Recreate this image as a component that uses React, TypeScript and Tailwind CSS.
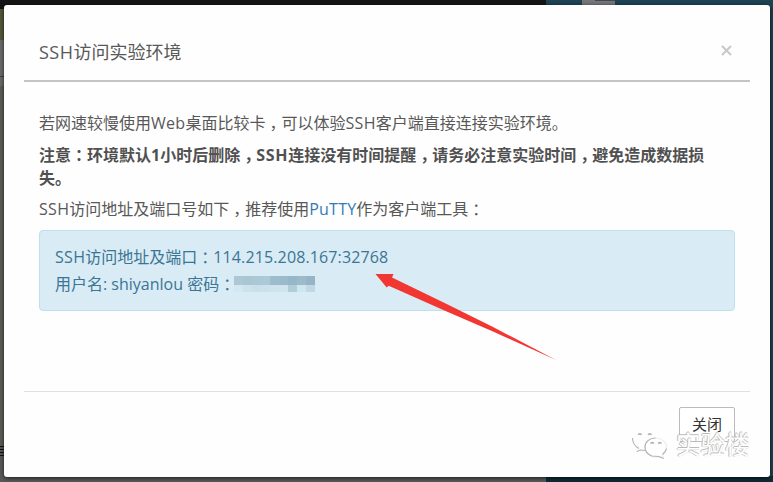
import type { ReactNode } from 'react';

// Full-width punctuation with its ink moved closer to the middle of its cell.
function Mark({ children }: { children: ReactNode }) {
  return <span className="inline-block w-[16px] pl-[4px]">{children}</span>;
}

function Latin({ children }: { children: ReactNode }) {
  return <span className="tracking-[0.3px]">{children}</span>;
}

function Backdrop() {
  return (
    <div className="absolute inset-0 flex bg-[#1e4352]">
      <div className="flex w-[546px] flex-col bg-[#595959]">
        <div className="h-[9px] bg-[#151515]" />
        <div className="h-[31px] w-[4px] bg-[#55573b]" />
        <div className="h-[36px] w-[4px] bg-[#6b6c69]" />
        <div className="h-px w-[4px] bg-[#41423f]" />
        <div className="h-[9px] w-[4px] bg-[#6b6c69]" />
        <div className="h-[360px] w-[4px] bg-[#5c5d57]" />
        <div className="flex h-[12px] w-[4px] flex-col gap-[2px]">
          <div className="h-px bg-[#111]" />
          <div className="h-px bg-[#111]" />
          <div className="h-px bg-[#111]" />
          <div className="h-px bg-[#111]" />
        </div>
      </div>
      <div className="flex flex-1 flex-col justify-between">
        <div className="ml-[36px] h-[5px] w-[33px] bg-[#77777b] pl-[13px]">
          <div className="h-[1px] bg-[#3d4a54]" />
        </div>
        <div className="h-[6px] bg-[#0f2a36]" />
      </div>
    </div>
  );
}

function Watermark() {
  return (
    <div className="absolute left-[631px] top-[429px] flex items-center">
      <svg width="38" height="32" viewBox="0 0 38 32" fill="none" stroke="#b4b4b4" strokeWidth="1.2">
        <path d="M1.500 9C1.500 14 3 16.500 8 19.500M5.500 22.500L9.500 21L14 21.500" />
        <path
          d="M24.500 9C30.500 9 35.500 13 35.500 18C35.500 21 34 23.500 31.500 25.500L32.500 29.500L28.500 27.500C22 29.500 14 25.500 14 18C14 13 18.500 9 24.500 9Z"
          fill="white"
          stroke="#ececec"
        />
        <path d="M24.500 9C18.500 9 14 13 14 18C14 22 17 25.500 21 27L28 27.500L32.500 29.500M35.500 19.500C35 22 34 23.500 31.500 25.500" />
        <path d="M7 5.700Q8.800 4 10.600 5.700M17 5.700Q18.800 4 20.600 5.700M19.500 14.500Q21.300 12.800 23 14.500M27 14.500Q28.800 12.800 30.500 14.500" strokeWidth="1.500" />
      </svg>
      <span className="ml-[7px] text-[24.5px] leading-[32px] text-white [text-shadow:-1px_0_0_#bbb,0_-1px_0_#bbb,0_0_1px_#ccc]">
        实验楼
      </span>
    </div>
  );
}

const blocks = [
  ['#adc8d5', '#abc6d3', '#aac8d5', '#abc9d6', '#9dbdcc', '#9abbcb', '#95b7c8', '#9cbac9', '#95b5c5'],
  ['#d3e8f1', '#cce3ed', '#c8e0ea', '#cbe2ec', '#cde3ed', '#cee4ee', '#b0cdd9', '#cfe5ef', '#bfd8e4'],
];

export default function App() {
  return (
    <div className="relative h-[482px] w-[773px] overflow-hidden px-[4px] pt-[5px] font-['Open_Sans','Noto_Sans_CJK_SC',sans-serif] text-[16px] leading-[23px] text-[#585858]">
      <Backdrop />
      <div className="relative flex h-[472px] w-[766px] flex-col rounded-[3px] bg-[#fefefe] px-[20px] shadow-[0_1px_4px_rgba(0,0,0,0.7)]">
        <header className="flex h-[77px] items-center justify-between border-b-2 border-[#c4c4c4] pl-[15px] pr-[17px] pt-[19px]">
          <h1 className="text-[18px] leading-[26px]">
            <span className="tracking-[0.5px]">SSH</span>访问实验环境
          </h1>
          <button aria-label="×" className="mt-[-4px] flex">
            <svg width="13" height="13" viewBox="0 0 13 13" stroke="#c8c8c8" strokeWidth="2">
              <path d="M2 2L11 11M11 2L2 11" />
            </svg>
          </button>
        </header>

        <main className="flex flex-1 flex-col px-[15px] pt-[30px]">
          <p className="whitespace-nowrap">
            若网速较慢使用<Latin>Web</Latin>桌面比较卡<Mark>，</Mark>可以体验<Latin>SSH</Latin>客户端直接连接实验环境。
          </p>
          <p className="mt-[9px] whitespace-nowrap font-bold text-[#505050]">
            注意<Mark>：</Mark>环境默认1小时后删除<Mark>，</Mark><span className="tracking-[0.7px]">SSH</span>连接没有时间提醒<Mark>，</Mark>请务必注意实验时间<Mark>，</Mark>避免造成数据损
            <br />
            失。
          </p>
          <p className="mt-[8px] whitespace-nowrap">
            <Latin>SSH</Latin>访问地址及端口号如下<Mark>，</Mark>推荐使用<a className="tracking-[0.2px] text-[#337ab7]">PuTTY</a>作为客户端工具<Mark>：</Mark>
          </p>
          <section className="mt-[9px] flex h-[81px] flex-col gap-[4px] rounded-[4px] border border-[#bfe0ea] bg-[#d9ebf5] px-[15px] pt-[15px] text-[#3b7594]">
            <p className="whitespace-nowrap">
              <Latin>SSH</Latin>访问地址及端口<Mark>：</Mark><span className="tracking-[0.13px]">114.215.208.167:32768</span>
            </p>
            <div className="flex whitespace-nowrap">
              <p>
                用户名: shiyanlou 密码<Mark>：</Mark>
              </p>
              <div className="-ml-px mt-[3px]">
                {blocks.map((row, r) => (
                  <div key={r} className="flex">
                    {row.map((color, i) => (
                      <div key={i} className={r === 0 ? 'h-[9px] w-[9px]' : 'h-[7px] w-[9px]'} style={{ backgroundColor: color }} />
                    ))}
                  </div>
                ))}
              </div>
            </div>
          </section>
        </main>

        <footer className="flex h-[86px] items-start justify-end border-t border-[#e1e1e1] pr-[15px] pt-[15px]">
          <button className="h-[35px] w-[56px] rounded-[2px] border border-[#bbb] bg-white text-[15px] text-[#333]">
            关闭
          </button>
        </footer>
      </div>

      <svg className="absolute left-[370px] top-[268px]" width="190" height="96" viewBox="0 0 190 96">
        <path d="M5.500 6L23.500 6L22 9.500L76.700 36L123 59L186 92L123 63.500L76.700 43.500L18.700 17.700L16.700 19.500Z" fill="#f23632" />
      </svg>
      <Watermark />
    </div>
  );
}
